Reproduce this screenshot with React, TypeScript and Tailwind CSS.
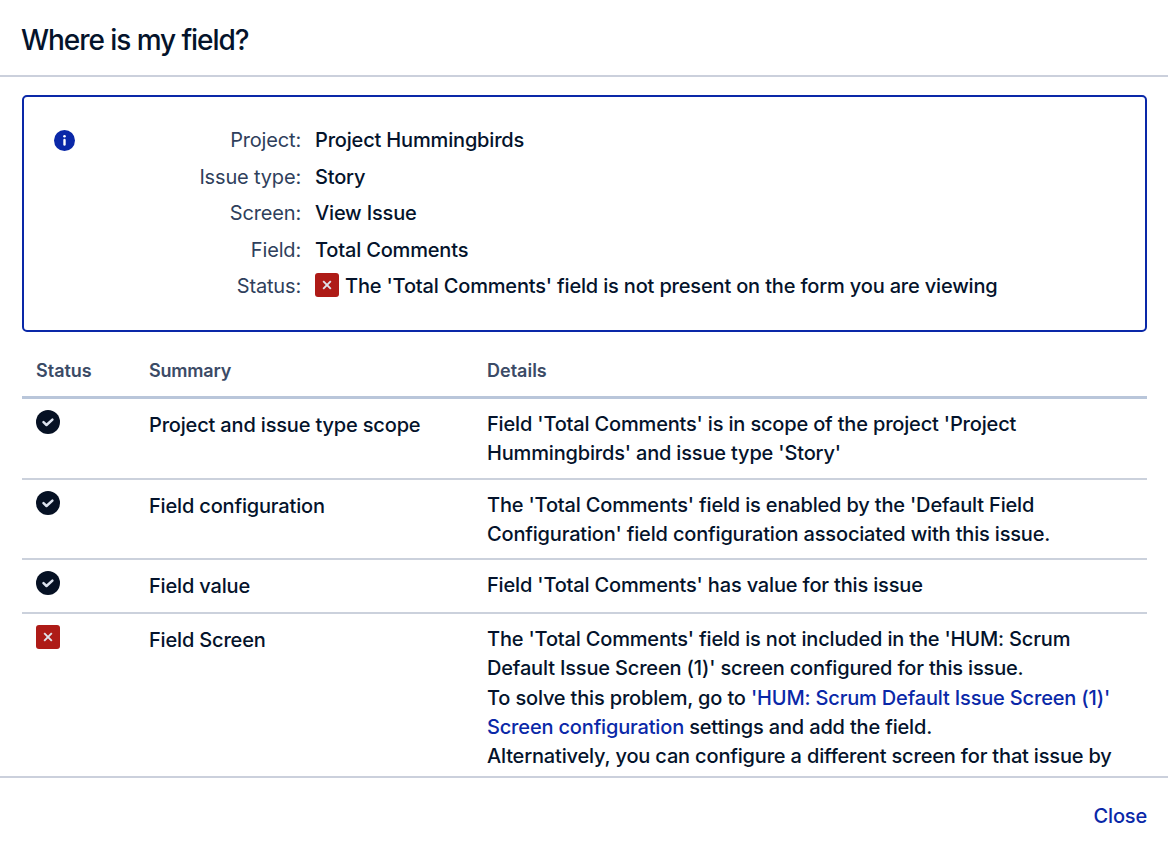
import type { ReactNode } from "react";

function InfoIcon() {
  return (
    <svg className="absolute top-[33px] left-[30px] size-[21px]" viewBox="0 0 21 21">
      <circle cx="10.5" cy="10.5" r="10.5" fill="#0a28a8" />
      <circle cx="10.5" cy="6.3" r="1.3" fill="#fff" />
      <path d="M10.5 9.9v4.6" stroke="#fff" strokeWidth="2.4" strokeLinecap="round" />
    </svg>
  );
}

function ErrorIcon({ className = "" }: { className?: string }) {
  return (
    <svg className={`size-6 shrink-0 ${className}`} viewBox="0 0 24 24">
      <rect width="24" height="24" rx="3" fill="#ae1b17" />
      <path d="M8.2 8.2l7.6 7.6M15.8 8.2l-7.6 7.6" stroke="#e0e4ec" strokeWidth="1.9" />
    </svg>
  );
}

function CheckIcon() {
  return (
    <svg className="size-6" viewBox="0 0 24 24">
      <circle cx="12" cy="12" r="12" fill="#061124" />
      <path d="M7.5 12.2l3 2.8 5.9-5.4" fill="none" stroke="#dce2ee" strokeWidth="2.5" strokeLinecap="round" strokeLinejoin="round" />
    </svg>
  );
}

function InfoRow({ label, children }: { label: string; children: ReactNode }) {
  return (
    <div className="flex h-[36.5px] items-center">
      <div className="w-[277px] text-right font-normal text-[#2f3f5c]">{label}</div>
      <div className="ml-[14px] flex items-center gap-[6px] whitespace-nowrap">{children}</div>
    </div>
  );
}

function Row({ ok, name, height, children }: { ok: boolean; name: string; height: string; children: ReactNode }) {
  return (
    <div className={`flex border-b-2 border-[#cbd1dc] ${height}`}>
      <div className="w-[127px] shrink-0 pt-[11px] pl-[14px]">{ok ? <CheckIcon /> : <ErrorIcon />}</div>
      <div className="w-[338px] shrink-0 pt-[12px]">{name}</div>
      <div className="whitespace-nowrap pt-[11px]">{children}</div>
    </div>
  );
}

export default function App() {
  return (
    <div className="flex h-[845px] w-[1168px] flex-col overflow-hidden bg-white font-['Inter',sans-serif] text-[20px] leading-[29.3px] font-[450] tracking-[-0.17px] text-[#04132b]">
      <header className="flex h-[77px] shrink-0 items-center border-b-2 border-[#cbd0dc] px-[21px] pt-[7px] text-[28px] tracking-[-1.06px]">
        <h1>Where is my field?</h1>
      </header>
      <main className="h-[699px] overflow-hidden pt-[18px] pr-[21px] pl-[22px]">
        <section className="relative h-[237px] rounded-[5px] border-2 border-[#0a28a8] pt-[25.5px]">
          <InfoIcon />
          <InfoRow label="Project:">Project Hummingbirds</InfoRow>
          <InfoRow label="Issue type:">Story</InfoRow>
          <InfoRow label="Screen:">View Issue</InfoRow>
          <InfoRow label="Field:">Total Comments</InfoRow>
          <InfoRow label="Status:"><ErrorIcon className="mb-[3px]" />The 'Total Comments' field is not present on the form you are viewing</InfoRow>
        </section>
        <div className="flex h-[67px] items-center border-b-[3px] border-[#b9c6da] pt-[13px] text-[18px] font-semibold tracking-normal text-[#3b4b66]">
          <div className="w-[127px] pl-[14px]">Status</div>
          <div className="w-[338px] tracking-[-0.2px]">Summary</div>
          <div>Details</div>
        </div>
        <Row ok name="Project and issue type scope" height="h-[80.5px]">Field 'Total Comments' is in scope of the project 'Project<br />Hummingbirds' and issue type 'Story'</Row>
        <Row ok name="Field configuration" height="h-[80.5px]">The 'Total Comments' field is enabled by the 'Default Field<br />Configuration' field configuration associated with this issue.</Row>
        <Row ok name="Field value" height="h-[54px]">Field 'Total Comments' has value for this issue</Row>
        <Row ok={false} name="Field Screen" height="h-[200px]">The 'Total Comments' field is not included in the 'HUM: Scrum<br />Default Issue Screen (1)' screen configured for this issue.<br />To solve this problem, go to <a className="text-[#0a28a8]">'HUM: Scrum Default Issue Screen (1)'<br />Screen configuration</a> settings and add the field.<br />Alternatively, you can configure a different screen for that issue by</Row>
      </main>
      <footer className="flex flex-1 items-center justify-end border-t-2 border-[#cbd0dc] px-[21px] pt-[11px] text-[#0a28a8]"><button>Close</button></footer>
    </div>
  );
}
